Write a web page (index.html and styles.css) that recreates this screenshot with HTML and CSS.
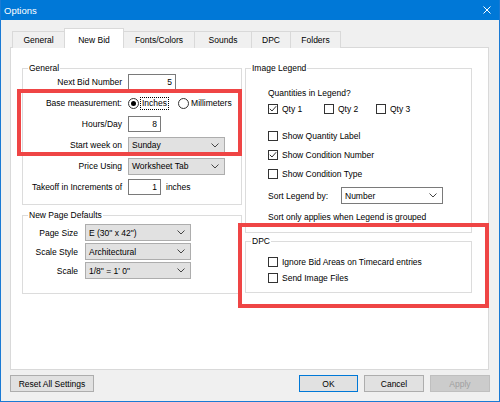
FILE: index.html
```html
<!DOCTYPE html>
<html>
<head>
<meta charset="utf-8">
<title>Options</title>
<link rel="stylesheet" href="styles.css">
</head>
<body>
<div class="window">
  <div class="titlebar">
    <span class="title">Options</span>
    <svg class="close" width="8" height="8" viewBox="0 0 8 8"><path d="M0.5 0.5 L7.5 7.5 M7.5 0.5 L0.5 7.5" stroke="#fff" stroke-width="1" fill="none"/></svg>
  </div>
  <div class="client">
    <div class="tabs">
      <div class="tab t-general">General</div>
      <div class="tab t-newbid selected">New Bid</div>
      <div class="tab t-fonts">Fonts/Colors</div>
      <div class="tab t-sounds">Sounds</div>
      <div class="tab t-dpc">DPC</div>
      <div class="tab t-folders">Folders</div>
    </div>
    <div class="pane">
      <div class="col">
        <fieldset class="group g-general">
          <legend>General</legend>
          <div class="form form-general">
            <span class="lbl">Next Bid Number</span>
            <input class="edit w48" type="text" value="5">
            <span class="lbl">Base measurement:</span>
            <div class="radio-group">
              <label class="radio"><span class="dot on"></span><span class="focus">Inches</span></label>
              <label class="radio"><span class="dot"></span><span>Millimeters</span></label>
            </div>
            <span class="lbl">Hours/Day</span>
            <input class="edit w33" type="text" value="8">
            <span class="lbl">Start week on</span>
            <div class="combo w97"><span>Sunday</span><svg width="8" height="5" viewBox="0 0 8 5"><path d="M0.5 0.5 L4 4 L7.5 0.5" stroke="#444" fill="none"/></svg></div>
            <span class="lbl">Price Using</span>
            <div class="combo w97"><span>Worksheet Tab</span><svg width="8" height="5" viewBox="0 0 8 5"><path d="M0.5 0.5 L4 4 L7.5 0.5" stroke="#444" fill="none"/></svg></div>
            <span class="lbl">Takeoff in Increments of</span>
            <div class="inline"><input class="edit w33" type="text" value="1"><span>inches</span></div>
          </div>
        </fieldset>
        <fieldset class="group g-page">
          <legend>New Page Defaults</legend>
          <div class="form form-page">
            <span class="lbl">Page Size</span>
            <div class="combo w106"><span>E (30" x 42")</span><svg width="8" height="5" viewBox="0 0 8 5"><path d="M0.5 0.5 L4 4 L7.5 0.5" stroke="#444" fill="none"/></svg></div>
            <span class="lbl">Scale Style</span>
            <div class="combo w106"><span>Architectural</span><svg width="8" height="5" viewBox="0 0 8 5"><path d="M0.5 0.5 L4 4 L7.5 0.5" stroke="#444" fill="none"/></svg></div>
            <span class="lbl">Scale</span>
            <div class="combo w106"><span>1/8" = 1' 0"</span><svg width="8" height="5" viewBox="0 0 8 5"><path d="M0.5 0.5 L4 4 L7.5 0.5" stroke="#444" fill="none"/></svg></div>
          </div>
        </fieldset>
      </div>
      <div class="col col-right">
        <fieldset class="group g-legend">
          <legend>Image Legend</legend>
          <div class="legend-body">
            <div class="row">Quantities in Legend?</div>
            <div class="row qty-row">
              <label class="check"><span class="cb on"><svg width="8" height="8" viewBox="0 0 8 8"><path d="M0.8 3.8 L3 6 L7.2 1.2" stroke="#333" fill="none"/></svg></span>Qty 1</label>
              <label class="check"><span class="cb"></span>Qty 2</label>
              <label class="check"><span class="cb"></span>Qty 3</label>
            </div>
            <div class="row r-sql"><label class="check"><span class="cb"></span>Show Quantity Label</label></div>
            <div class="row r-next"><label class="check"><span class="cb on"><svg width="8" height="8" viewBox="0 0 8 8"><path d="M0.8 3.8 L3 6 L7.2 1.2" stroke="#333" fill="none"/></svg></span>Show Condition Number</label></div>
            <div class="row r-next"><label class="check"><span class="cb"></span>Show Condition Type</label></div>
            <div class="sort-row">
              <span class="sort-lbl">Sort Legend by:</span>
              <div class="combo white w102"><span>Number</span><svg width="8" height="5" viewBox="0 0 8 5"><path d="M0.5 0.5 L4 4 L7.5 0.5" stroke="#444" fill="none"/></svg></div>
            </div>
            <div class="row r-next">Sort only applies when Legend is grouped</div>
          </div>
        </fieldset>
        <fieldset class="group g-dpc">
          <legend>DPC</legend>
          <div class="dpc-body">
            <div class="row"><label class="check"><span class="cb"></span>Ignore Bid Areas on Timecard entries</label></div>
            <div class="row"><label class="check"><span class="cb"></span>Send Image Files</label></div>
          </div>
        </fieldset>
      </div>
      <div class="callout c1"></div>
      <div class="callout c2"></div>
    </div>
    <div class="buttons">
      <button class="btn b-reset">Reset All Settings</button>
      <button class="btn b-ok">OK</button>
      <button class="btn b-cancel">Cancel</button>
      <button class="btn b-apply" disabled>Apply</button>
    </div>
  </div>
</div>
</body>
</html>
```

FILE: styles.css
```css
html, body {
  margin: 0;
  padding: 0;
  background: #ffffff;
}
body {
  font-family: "Liberation Sans", Arial, sans-serif;
  font-size: 8.5px;
  color: #000;
}
.window {
  width: 500px;
  height: 402px;
  box-sizing: border-box;
  border: 1px solid #1a7ad4;
  border-top: none;
  background: #f0f0f0;
  display: flex;
  flex-direction: column;
}
.titlebar {
  height: 20px;
  flex: none;
  background: #0078d7;
  color: #fff;
  display: flex;
  align-items: center;
  justify-content: space-between;
  padding: 0 8px 0 3px;
  font-size: 9.5px;
}
.close { display: block; }
.client {
  flex: 1;
  display: flex;
  flex-direction: column;
  padding: 8px 0 0 9px;
}
.tabs {
  display: flex;
  align-items: flex-end;
  height: 20px;
  padding-left: 2px;
  margin-bottom: -1px;
  position: relative;
  z-index: 1;
}
.tab {
  box-sizing: border-box;
  height: 17px;
  line-height: 16px;
  border: 1px solid #d9d9d9;
  border-bottom: none;
  background: #f0f0f0;
  text-align: center;
  margin-right: -1px;
}
.tab.selected {
  height: 20px;
  padding-top: 3px;
  background: #fff;
  position: relative;
  z-index: 2;
}
.t-general { width: 53px; }
.t-newbid { width: 60px; }
.t-fonts { width: 72px; }
.t-sounds { width: 58px; }
.t-dpc { width: 40px; }
.t-folders { width: 51px; }

.pane {
  width: 479px;
  height: 323px;
  box-sizing: border-box;
  border: 1px solid #d9d9d9;
  background: #fff;
  position: relative;
  padding: 15px 16px 0 11px;
  display: grid;
  grid-template-columns: 220px 227px;
  column-gap: 3px;
  align-items: start;
}
.col {
  display: flex;
  flex-direction: column;
  gap: 5px;
}
.col-right { gap: 3px; }

.group {
  margin: 0;
  padding: 0;
  border: 1px solid #dcdcdc;
  box-sizing: border-box;
  min-width: 0;
}
.group legend {
  padding: 0 1px;
  margin-left: 5px;
  line-height: 10px;
  height: 10px;
}
.g-general { height: 142px; }
.g-page { height: 84px; }
.g-legend { height: 170px; }
.g-dpc { height: 57px; }

.form {
  display: grid;
  align-items: center;
}
.form-general {
  grid-template-columns: 99px auto;
  column-gap: 6px;
  row-gap: 5px;
  grid-auto-rows: 16px;
  padding-top: 1px;
}
.form-page {
  grid-template-columns: 55px auto;
  column-gap: 7px;
  row-gap: 2px;
  grid-auto-rows: 17px;
  padding-top: 4px;
}
.lbl {
  justify-self: end;
  white-space: nowrap;
}
.edit {
  box-sizing: border-box;
  height: 16px;
  border: 1px solid #7a7a7a;
  padding: 0 3px;
  margin: 0;
  font: inherit;
  text-align: right;
  background: #fff;
  color: #000;
  outline: none;
}
.w48 { width: 48px; }
.w33 { width: 33px; }
.inline {
  display: flex;
  align-items: center;
  gap: 5px;
}
.combo {
  box-sizing: border-box;
  height: 17px;
  border: 1px solid #adadad;
  background: #e1e1e1;
  display: flex;
  align-items: center;
  justify-content: space-between;
  padding: 0 5px 0 3px;
}
.combo svg { display: block; }
.combo.white {
  background: #fff;
  border-color: #7a7a7a;
}
.w97 { width: 97px; }
.w106 { width: 106px; }
.w102 { width: 102px; }

.radio-group {
  display: flex;
  align-items: center;
  gap: 10px;
}
.radio {
  display: flex;
  align-items: center;
  gap: 2px;
}
.dot {
  width: 11px;
  height: 11px;
  box-sizing: border-box;
  border: 1px solid #333;
  border-radius: 50%;
  background: #fff;
  display: flex;
  align-items: center;
  justify-content: center;
}
.dot.on::after {
  content: "";
  width: 5px;
  height: 5px;
  border-radius: 50%;
  background: #000;
}
.focus {
  outline: 1px dotted #000;
  outline-offset: 0;
  padding: 0 1px;
  line-height: 11px;
}

.legend-body {
  padding: 14px 0 0 22px;
  display: flex;
  flex-direction: column;
}
.dpc-body {
  padding: 10px 0 0 22px;
  display: flex;
  flex-direction: column;
  gap: 4px;
}
.row {
  height: 12px;
  line-height: 12px;
  display: flex;
  align-items: center;
  white-space: nowrap;
}
.qty-row { margin-top: 4px; }
.r-sql { margin-top: 15px; }
.r-next { margin-top: 7px; }
.check {
  display: flex;
  align-items: center;
  gap: 4px;
}
.qty-row .check:nth-child(1) { width: 56px; }
.qty-row .check:nth-child(2) { width: 52px; }
.cb {
  width: 10px;
  height: 10px;
  box-sizing: border-box;
  border: 1px solid #333;
  background: #fff;
  display: flex;
  align-items: center;
  justify-content: center;
}
.cb svg { display: block; }
.sort-row {
  margin-top: 7px;
  display: flex;
  align-items: center;
}
.sort-lbl { width: 73px; }

.callout {
  position: absolute;
  box-sizing: border-box;
  border: 4px solid #ef4545;
  pointer-events: none;
}
.c1 { left: 6px; top: 41px; width: 225px; height: 67px; }
.c2 { left: 227px; top: 175px; width: 251px; height: 85px; }

.buttons {
  display: flex;
  margin-top: 5px;
  padding-right: 9px;
  gap: 6px;
}
.btn {
  box-sizing: border-box;
  height: 17px;
  border: 1px solid #adadad;
  background: #e1e1e1;
  font: inherit;
  color: #000;
  padding: 0;
  margin: 0;
}
.b-reset { width: 84px; margin-right: auto; }
.b-ok { width: 59px; border-color: #0078d7; }
.b-cancel { width: 60px; }
.b-apply { width: 60px; color: #a0a0a0; background: #cccccc; border-color: #bfbfbf; }
```
